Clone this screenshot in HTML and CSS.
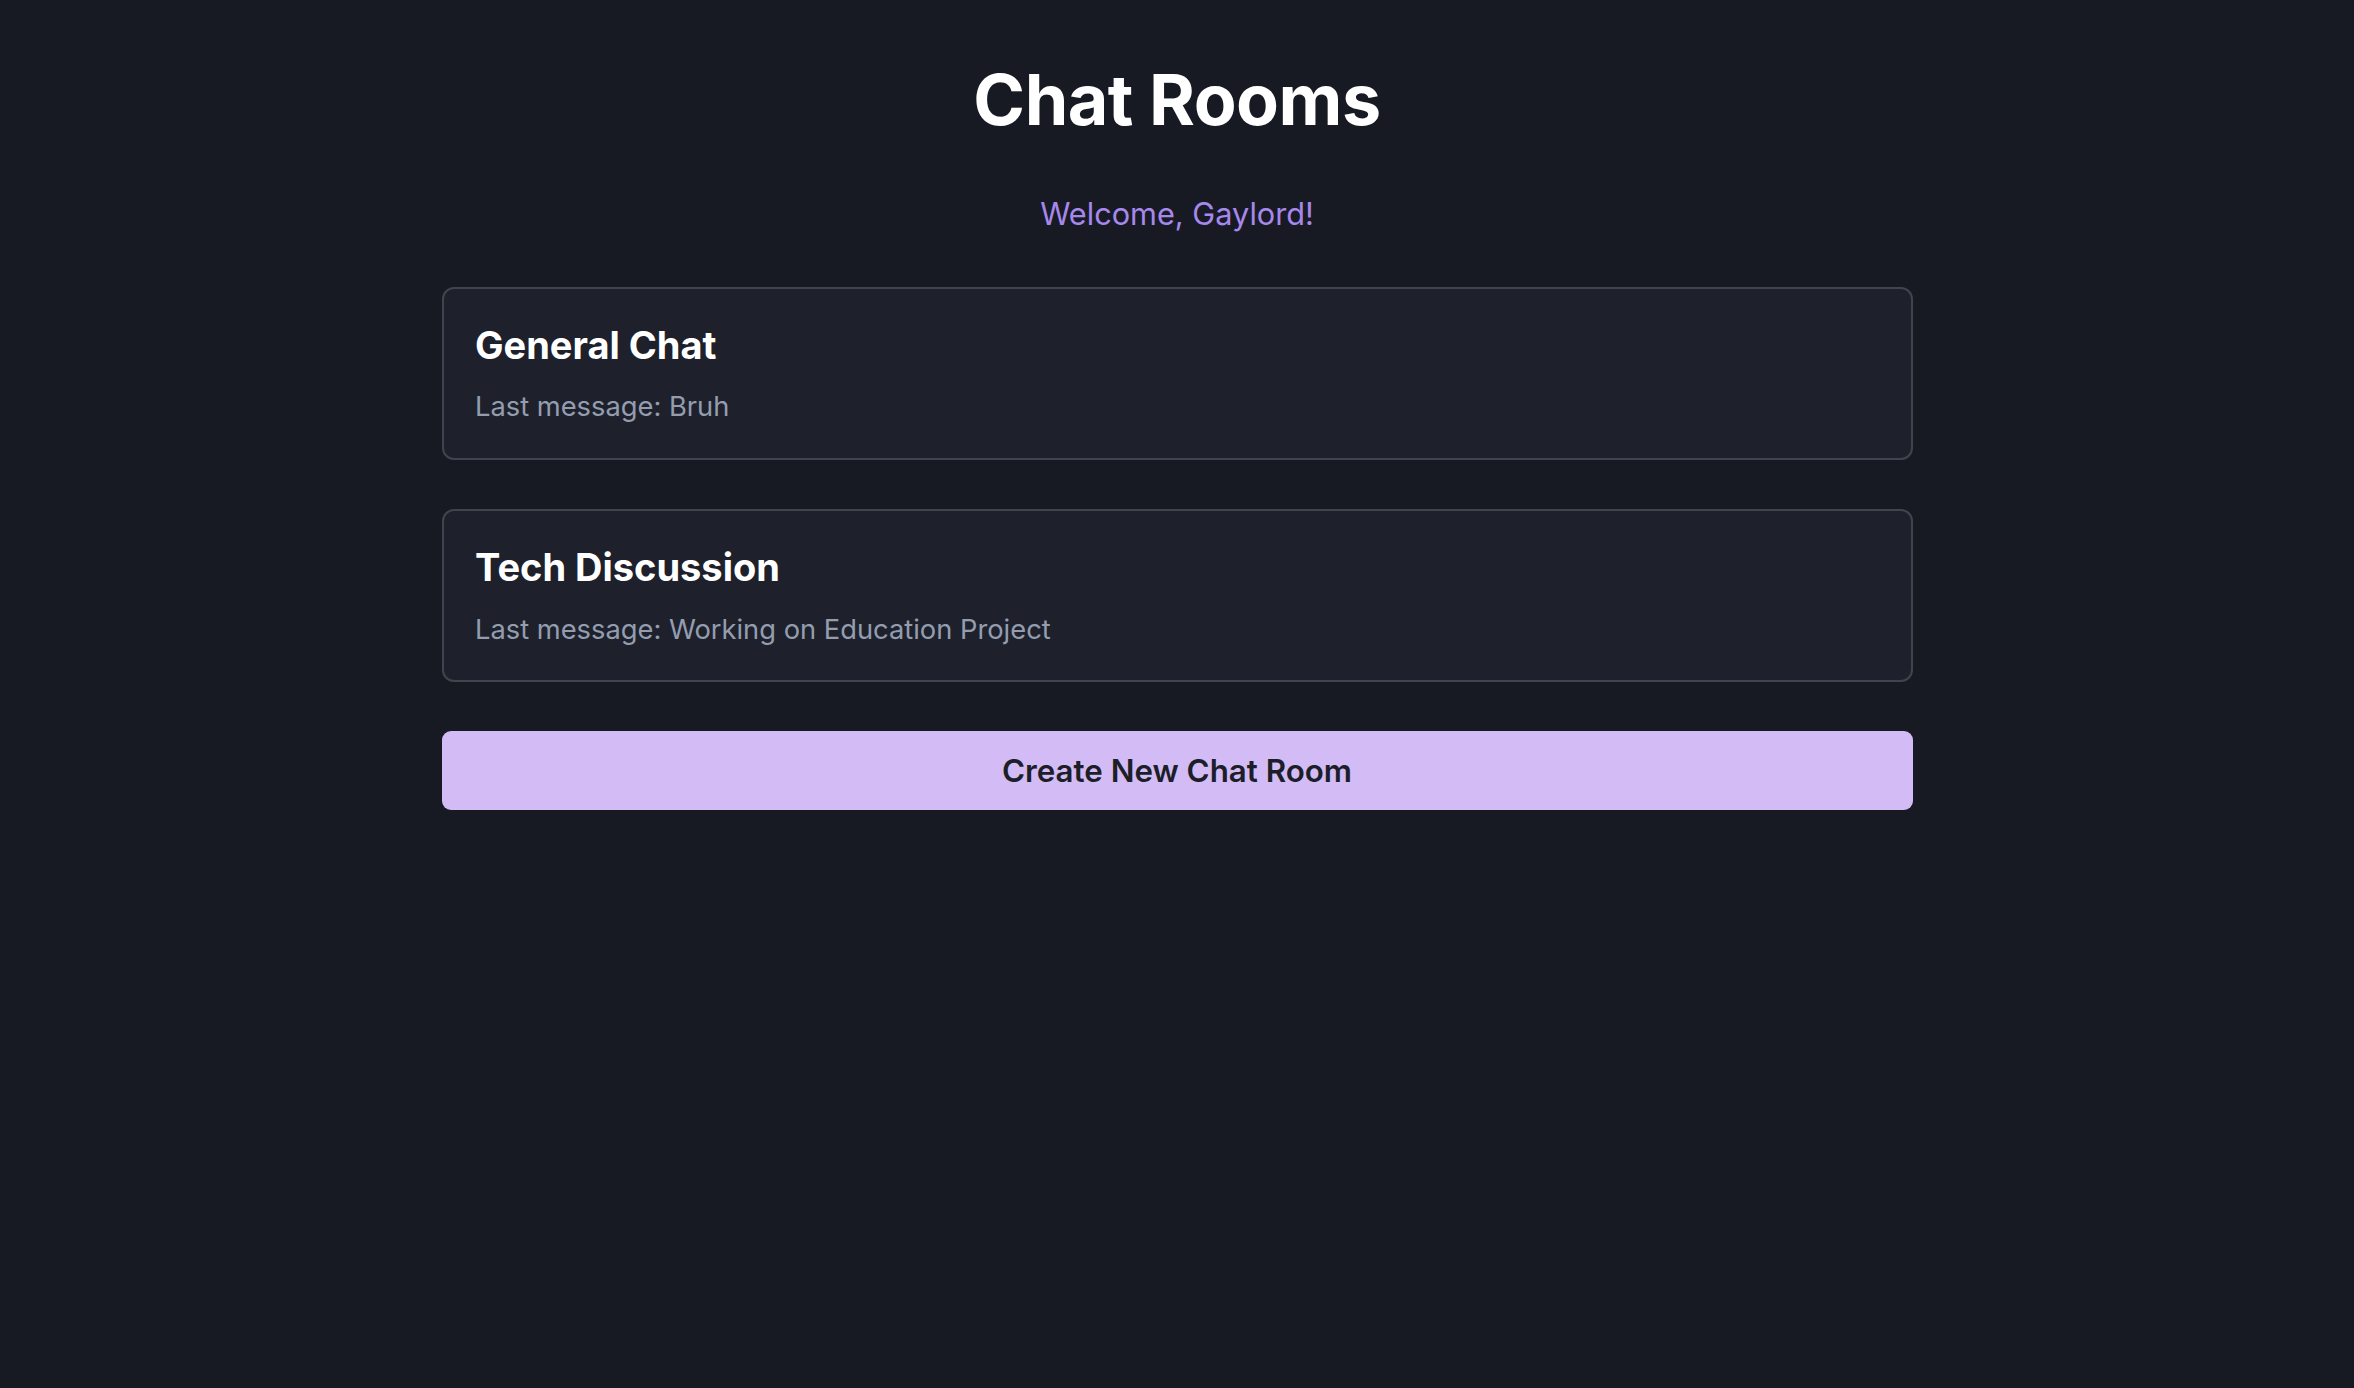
FILE: index.html
```html
<!DOCTYPE html>
<html lang="en">
<head>
<meta charset="utf-8">
<title>Chat Rooms</title>
<link rel="stylesheet" href="styles.css">
</head>
<body>
<main class="page">
  <h1 class="title">Chat Rooms</h1>
  <p class="welcome">Welcome, Gaylord!</p>
  <section class="room">
    <h2 class="room-name">General Chat</h2>
    <p class="room-last">Last message: Bruh</p>
  </section>
  <section class="room">
    <h2 class="room-name">Tech Discussion</h2>
    <p class="room-last">Last message: Working on Education Project</p>
  </section>
  <button class="create-btn" type="button">Create New Chat Room</button>
</main>
</body>
</html>
```

FILE: styles.css
```css
* { box-sizing: border-box; }
html, body {
  margin: 0;
  padding: 0;
  background: #181a23;
  min-height: 100%;
}
body {
  font-family: Inter, "Noto Sans", "Liberation Sans", sans-serif;
  color: #ffffff;
}
.page {
  width: 1471px;
  margin: 0 auto;
  padding-top: 58px;
  display: flex;
  flex-direction: column;
  align-items: stretch;
  gap: 49.3px;
}
.title {
  margin: 0;
  text-align: center;
  font-size: 70px;
  font-weight: 700;
  letter-spacing: -0.5px;
  line-height: 1.2;
  color: #ffffff;
}
.welcome {
  margin: 0;
  text-align: center;
  font-size: 30.7px;
  line-height: 1.5;
  color: #a688ec;
}
.room {
  background: #1e212b;
  border: 2px solid #41444f;
  border-radius: 12px;
  padding: 34px 31.5px 29.5px;
  display: flex;
  flex-direction: column;
  gap: 19px;
}
.room-name {
  margin: 0;
  font-size: 38px;
  font-weight: 700;
  line-height: 1.2;
  color: #ffffff;
}
.room-last {
  margin: 0;
  font-size: 27.3px;
  line-height: 1.5;
  color: #949db0;
}
.create-btn {
  height: 79px;
  border: none;
  border-radius: 9px;
  background: #d3bcf6;
  color: #1c1f29;
  font-family: inherit;
  font-size: 31.3px;
  font-weight: 600;
  cursor: pointer;
}
```
